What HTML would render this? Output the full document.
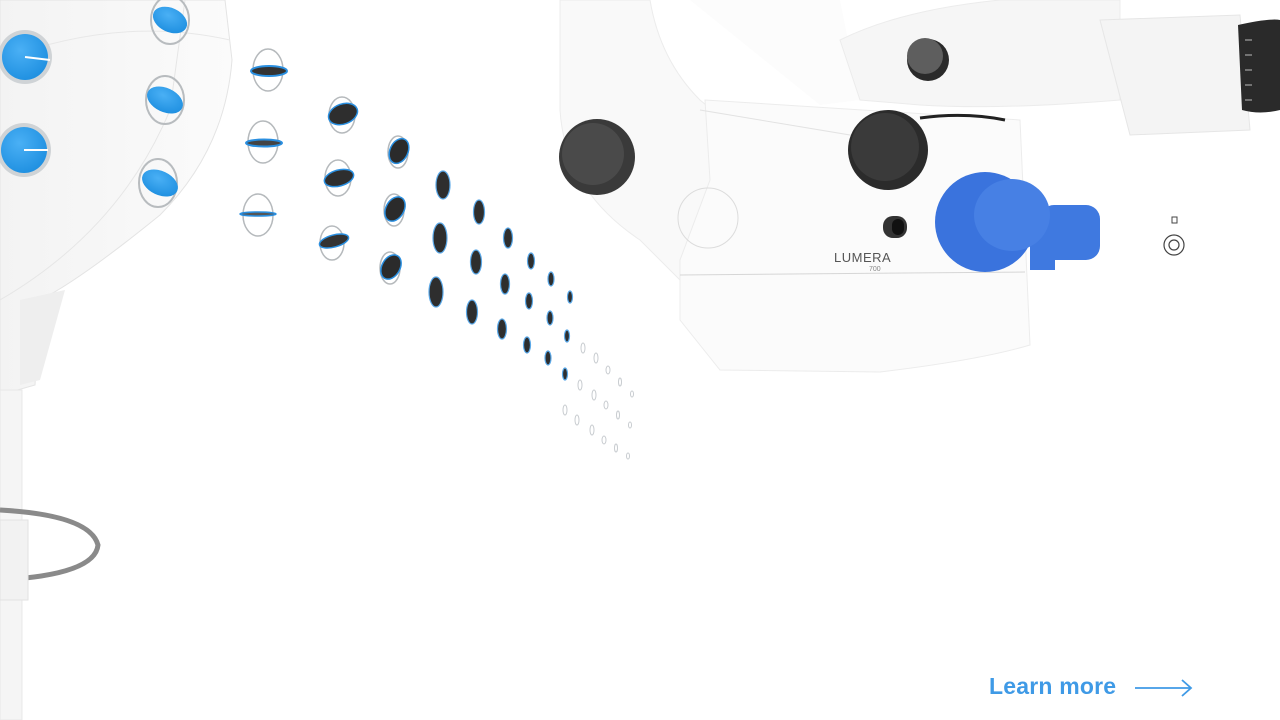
<!DOCTYPE html>
<html><head><meta charset="utf-8"><style>
html,body{margin:0;padding:0;background:#fff;width:1280px;height:720px;overflow:hidden;position:relative;font-family:"Liberation Sans",sans-serif}
svg{position:absolute;left:0;top:0}
.lm{position:absolute;left:989px;top:673px;font-size:23px;font-weight:bold;color:#3f9ae6;letter-spacing:0.2px}
</style></head><body>
<svg width="1280" height="720" viewBox="0 0 1280 720">
<defs>
<radialGradient id="bl" cx="40%" cy="35%" r="70%"><stop offset="0" stop-color="#4ab0f5"/><stop offset="1" stop-color="#1e8fe0"/></radialGradient>
<linearGradient id="wb" x1="0" x2="1"><stop offset="0" stop-color="#f3f3f3"/><stop offset="1" stop-color="#fbfbfb"/></linearGradient>
</defs>
<!-- left device body -->
<path d="M0 0 H225 L232 60 Q225 150 160 215 Q80 280 40 300 L35 385 L0 395 Z" fill="url(#wb)" stroke="#e4e4e4"/>
<path d="M0 60 Q120 15 230 40" fill="none" stroke="#e8e8e8"/>
<path d="M0 300 Q120 230 170 110 L185 0" fill="none" stroke="#e6e6e6"/>
<rect x="0" y="390" width="22" height="330" fill="#f5f5f5" stroke="#e8e8e8"/>
<path d="M20 300 L65 290 L40 380 L20 385 Z" fill="#eeeeee"/>
<path d="M0 510 Q90 515 98 545 Q95 575 0 580" fill="none" stroke="#8a8a8a" stroke-width="5"/>
<rect x="0" y="520" width="28" height="80" fill="#f2f2f2" stroke="#e2e2e2"/>
<!-- blue knobs on body -->
<circle cx="25" cy="57" r="27" fill="#cfd3d6"/><circle cx="25" cy="57" r="23" fill="url(#bl)"/><line x1="25" y1="57" x2="50" y2="60" stroke="#fff" stroke-width="2"/>
<circle cx="24" cy="150" r="27" fill="#cfd3d6"/><circle cx="24" cy="150" r="23" fill="url(#bl)"/><line x1="24" y1="150" x2="48" y2="150" stroke="#fff" stroke-width="2"/>
<ellipse cx="170" cy="20" rx="19" ry="24" fill="none" stroke="#b8bcbf" stroke-width="2"/><ellipse cx="170" cy="20" rx="18" ry="12" transform="rotate(25 170 20)" fill="url(#bl)"/>
<ellipse cx="165" cy="100" rx="19" ry="24" fill="none" stroke="#b8bcbf" stroke-width="2"/><ellipse cx="165" cy="100" rx="19" ry="12" transform="rotate(25 165 100)" fill="url(#bl)"/>
<ellipse cx="158" cy="183" rx="19" ry="24" fill="none" stroke="#b8bcbf" stroke-width="2"/><ellipse cx="160" cy="183" rx="19" ry="12" transform="rotate(25 160 183)" fill="url(#bl)"/>
<!-- rings with discs -->
<g fill="none" stroke="#b5b9bc" stroke-width="1.5">
<ellipse cx="268" cy="70" rx="15" ry="21"/><ellipse cx="263" cy="142" rx="15" ry="21"/><ellipse cx="258" cy="215" rx="15" ry="21"/>
<ellipse cx="342" cy="115" rx="13" ry="18"/><ellipse cx="338" cy="178" rx="13" ry="18"/><ellipse cx="332" cy="243" rx="12" ry="17"/>
<ellipse cx="398" cy="152" rx="10" ry="16"/><ellipse cx="394" cy="210" rx="10" ry="16"/><ellipse cx="390" cy="268" rx="10" ry="16"/>
</g>
<ellipse cx="269" cy="71" rx="18" ry="5" fill="#333" stroke="#2a8fe0" stroke-width="2"/>
<ellipse cx="264" cy="143" rx="18" ry="3.5" fill="#444" stroke="#2a8fe0" stroke-width="2"/>
<ellipse cx="258" cy="214" rx="18" ry="2" fill="#555" stroke="#2a8fe0" stroke-width="1.5"/>
<ellipse cx="343" cy="114" rx="15" ry="10" transform="rotate(-20 343 114)" fill="#2e2e2e" stroke="#2a8fe0" stroke-width="1.5"/>
<ellipse cx="339" cy="178" rx="15" ry="8" transform="rotate(-15 339 178)" fill="#2e2e2e" stroke="#2a8fe0" stroke-width="1.5"/>
<ellipse cx="334" cy="241" rx="15" ry="6" transform="rotate(-15 334 241)" fill="#333" stroke="#2a8fe0" stroke-width="1.5"/>
<ellipse cx="399" cy="151" rx="9" ry="13" transform="rotate(25 399 151)" fill="#2b2b2b" stroke="#2a8fe0" stroke-width="1.5"/>
<ellipse cx="395" cy="209" rx="9" ry="13" transform="rotate(30 395 209)" fill="#2b2b2b" stroke="#2a8fe0" stroke-width="1.5"/>
<ellipse cx="391" cy="267" rx="9" ry="13" transform="rotate(30 391 267)" fill="#2b2b2b" stroke="#2a8fe0" stroke-width="1.5"/>
<g fill="#2e2e2e" stroke="#5aa8e8" stroke-width="1.2">
<ellipse cx="443" cy="185" rx="7" ry="14"/><ellipse cx="440" cy="238" rx="7" ry="15"/><ellipse cx="436" cy="292" rx="7" ry="15"/>
<ellipse cx="479" cy="212" rx="5.5" ry="12"/><ellipse cx="476" cy="262" rx="5.5" ry="12"/><ellipse cx="472" cy="312" rx="5.5" ry="12"/>
<ellipse cx="508" cy="238" rx="4.5" ry="10"/><ellipse cx="505" cy="284" rx="4.5" ry="10"/><ellipse cx="502" cy="329" rx="4.5" ry="10"/>
<ellipse cx="531" cy="261" rx="3.5" ry="8"/><ellipse cx="529" cy="301" rx="3.5" ry="8"/><ellipse cx="527" cy="345" rx="3.5" ry="8"/>
<ellipse cx="551" cy="279" rx="3" ry="7"/><ellipse cx="550" cy="318" rx="3" ry="7"/><ellipse cx="548" cy="358" rx="3" ry="7"/>
<ellipse cx="570" cy="297" rx="2.5" ry="6"/><ellipse cx="567" cy="336" rx="2.5" ry="6"/><ellipse cx="565" cy="374" rx="2.5" ry="6"/>
</g>
<g fill="none" stroke="#c8ccd0" stroke-width="1">
<ellipse cx="583" cy="348" rx="2" ry="5"/><ellipse cx="580" cy="385" rx="2" ry="5"/><ellipse cx="577" cy="420" rx="2" ry="5"/><ellipse cx="565" cy="410" rx="2" ry="5"/>
<ellipse cx="596" cy="358" rx="2" ry="5"/><ellipse cx="594" cy="395" rx="2" ry="5"/><ellipse cx="592" cy="430" rx="2" ry="5"/>
<ellipse cx="608" cy="370" rx="2" ry="4"/><ellipse cx="606" cy="405" rx="2" ry="4"/><ellipse cx="604" cy="440" rx="2" ry="4"/>
<ellipse cx="620" cy="382" rx="1.5" ry="4"/><ellipse cx="618" cy="415" rx="1.5" ry="4"/><ellipse cx="616" cy="448" rx="1.5" ry="4"/>
<ellipse cx="632" cy="394" rx="1.5" ry="3"/><ellipse cx="630" cy="425" rx="1.5" ry="3"/><ellipse cx="628" cy="456" rx="1.5" ry="3"/>
</g>
<!-- microscope -->
<path d="M560 0 H650 Q660 60 700 100 L760 150 L800 250 L790 310 L720 320 L640 240 Q565 190 560 110 Z" fill="#f9f9f9" stroke="#ececec"/>
<path d="M690 0 H840 L860 100 L820 105 Z" fill="#fcfcfc"/>
<path d="M705 100 L1020 120 L1030 345 Q980 360 880 372 L720 370 L680 320 L680 260 L710 180 Z" fill="#fbfbfb" stroke="#ececec"/>
<path d="M680 275 L1025 272" stroke="#d6d6d6"/>
<path d="M700 110 L880 140" stroke="#e2e2e2"/>
<circle cx="708" cy="218" r="30" fill="none" stroke="#dcdcdc"/>
<path d="M840 40 Q900 10 1000 0 L1120 0 L1120 100 Q1000 110 920 105 L860 100 Z" fill="#f6f6f6" stroke="#ececec"/>
<path d="M1100 20 L1240 15 L1250 130 L1130 135 Z" fill="#f4f4f4" stroke="#e6e6e6"/>
<path d="M1238 25 Q1270 18 1280 20 L1280 110 Q1260 115 1242 110 Z" fill="#2a2a2a"/>
<g stroke="#bbb" stroke-width="1"><line x1="1245" y1="40" x2="1252" y2="40"/><line x1="1245" y1="55" x2="1252" y2="55"/><line x1="1245" y1="70" x2="1252" y2="70"/><line x1="1245" y1="85" x2="1252" y2="85"/><line x1="1245" y1="100" x2="1252" y2="100"/></g>
<path d="M920 118 Q965 112 1005 120" fill="none" stroke="#222" stroke-width="3"/>
<circle cx="597" cy="157" r="38" fill="#3a3a3a"/><circle cx="593" cy="154" r="31" fill="#4a4a4a"/>
<circle cx="888" cy="150" r="40" fill="#2b2b2b"/><circle cx="885" cy="147" r="34" fill="#3a3a3a"/>
<circle cx="928" cy="60" r="21" fill="#2a2a2a"/><circle cx="925" cy="56" r="18" fill="#5e5e5e"/>
<rect x="883" y="216" width="24" height="22" rx="10" fill="#333"/><rect x="892" y="219" width="12" height="16" rx="6" fill="#111"/>
<rect x="1040" y="205" width="60" height="55" rx="14" fill="#3f79e0"/>
<rect x="1030" y="210" width="25" height="60" fill="#3f79e0"/>
<circle cx="985" cy="222" r="50" fill="#3a73dd"/>
<ellipse cx="1012" cy="215" rx="38" ry="36" fill="#4780e4"/>
<text x="834" y="262" font-family="Liberation Sans, sans-serif" font-size="13" fill="#555" letter-spacing="0.5">LUMERA</text>
<text x="869" y="271" font-family="Liberation Sans, sans-serif" font-size="7" fill="#888">700</text>
<!-- small icon -->
<rect x="1172" y="217" width="5" height="6" fill="none" stroke="#444" stroke-width="1"/>
<circle cx="1174" cy="245" r="10" fill="none" stroke="#444" stroke-width="1.2"/>
<circle cx="1174" cy="245" r="5" fill="none" stroke="#444" stroke-width="1.2"/>
<!-- arrow -->
<line x1="1135" y1="688" x2="1191" y2="688" stroke="#3f9ae6" stroke-width="1.8"/>
<path d="M1182 680 L1191 688 L1182 696" fill="none" stroke="#3f9ae6" stroke-width="1.8"/>
</svg>
<div class="lm">Learn more</div>
</body></html>
